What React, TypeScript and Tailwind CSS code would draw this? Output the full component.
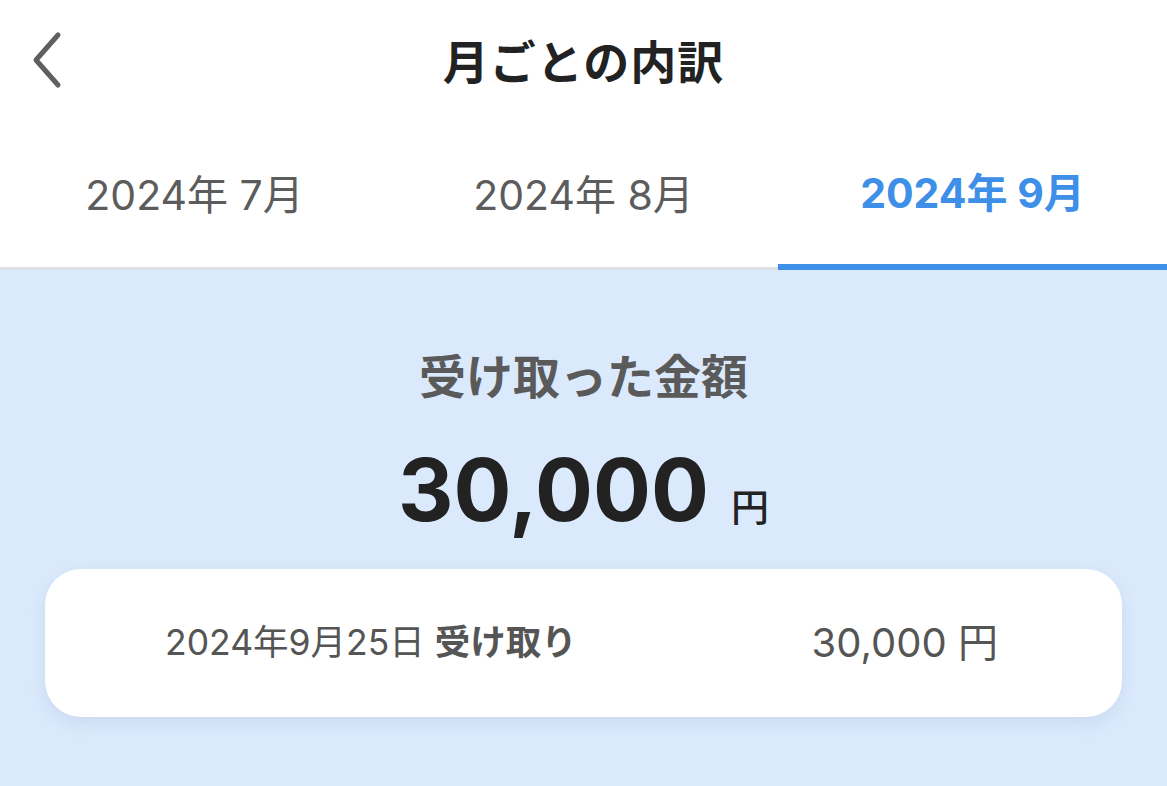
const months = ["2024年 7月", "2024年 8月", "2024年 9月"];
const activeIndex = 2;

function BackIcon() {
  return (
    <svg width="34" height="58" viewBox="0 0 34 58" fill="none">
      <path
        d="M28 4 L6 29 L28 54"
        stroke="#5f5f5f"
        strokeWidth="5"
        strokeLinecap="round"
        strokeLinejoin="round"
      />
    </svg>
  );
}

export default function App() {
  return (
    <div
      className="flex min-h-[786px] w-[1167px] flex-col bg-white"
      style={{ fontFamily: 'Inter, "Noto Sans CJK JP", sans-serif' }}
    >
      <header className="relative flex h-[124px] items-center justify-center">
        <button className="absolute left-[30px] top-[31px]">
          <BackIcon />
        </button>
        <h1 className="text-[46px] font-bold tracking-[1px] text-[#222]">月ごとの内訳</h1>
      </header>

      <nav className="grid grid-cols-3 border-b-[3px] border-[#dcdfe3]">
        {months.map((m, i) => (
          <div
            key={m}
            className={
              i === activeIndex
                ? "-mb-[3px] flex h-[146px] items-center justify-center border-b-[6px] border-[#3d8fe8] text-[41px] font-bold text-[#3d8fe8]"
                : "flex h-[143px] items-center justify-center text-[41px] text-[#5c5c5c]"
            }
          >
            {m}
          </div>
        ))}
      </nav>

      <main className="flex flex-1 flex-col items-center bg-[#dbe9fc] px-[45px] pt-[72px]">
        <h2 className="text-[47px] font-bold text-[#5a5a5a]">受け取った金額</h2>
        <div className="mt-[34px] flex items-baseline gap-[22px] text-[#222]">
          <span className="text-[86px] font-bold leading-none">30,000</span>
          <span className="text-[38px] font-medium">円</span>
        </div>

        <section className="mt-[33px] flex h-[148px] w-full items-center rounded-[36px] bg-white pl-[120px] pr-[124px] shadow-[0_6px_16px_rgba(120,150,190,0.18)]">
          <p className="flex-1 text-[35.5px] text-[#555]">
            2024年9月25日 <span className="font-bold">受け取り</span>
          </p>
          <p className="text-[40px] text-[#555]">30,000 円</p>
        </section>
      </main>
    </div>
  );
}
